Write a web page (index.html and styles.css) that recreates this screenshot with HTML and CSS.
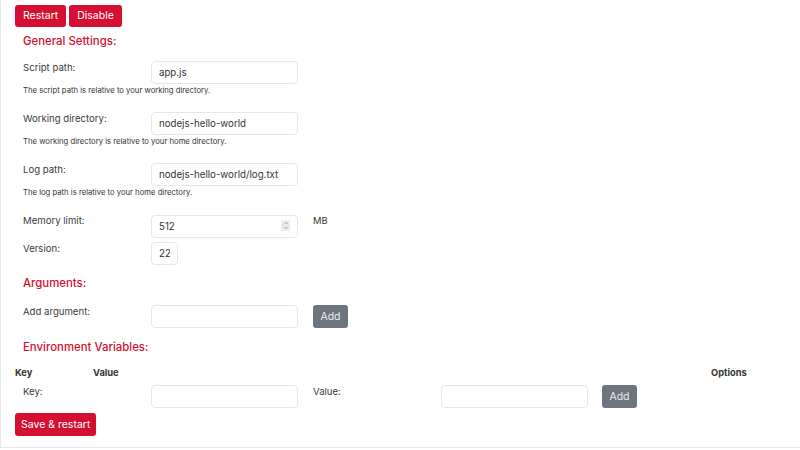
FILE: index.html
```html
<!DOCTYPE html>
<html>
<head>
<meta charset="utf-8">
<link rel="stylesheet" href="styles.css">
</head>
<body>
<div class="card">
  <div class="actions">
    <button class="btn btn-red">Restart</button>
    <button class="btn btn-red">Disable</button>
  </div>
  <div class="section">
    <h2 class="heading first">General Settings:</h2>
    <div class="row">
      <label class="label">Script path:</label>
      <input class="input" type="text" value="app.js">
    </div>
    <p class="help">The script path is relative to your working directory.</p>
    <div class="row gap">
      <label class="label">Working directory:</label>
      <input class="input" type="text" value="nodejs-hello-world">
    </div>
    <p class="help">The working directory is relative to your home directory.</p>
    <div class="row gap">
      <label class="label">Log path:</label>
      <input class="input" type="text" value="nodejs-hello-world/log.txt">
    </div>
    <p class="help">The log path is relative to your home directory.</p>
    <div class="row gap">
      <label class="label">Memory limit:</label>
      <div class="num-wrap">
        <input class="input" type="text" value="512">
        <span class="spinner"><svg width="6" height="9" viewBox="0 0 6 9"><path d="M1 3.2 L3 1.2 L5 3.2 M1 5.8 L3 7.8 L5 5.8" fill="none" stroke="#8a8f96" stroke-width="0.8"/></svg></span>
      </div>
      <span class="unit">MB</span>
    </div>
    <div class="row small-gap">
      <label class="label">Version:</label>
      <input class="input short" type="text" value="22">
    </div>
    <h2 class="heading">Arguments:</h2>
    <div class="row">
      <label class="label">Add argument:</label>
      <input class="input" type="text">
      <button class="btn btn-gray add">Add</button>
    </div>
    <h2 class="heading env">Environment Variables:</h2>
  </div>
  <div class="table-head">
    <span class="th th-key">Key</span>
    <span class="th th-value">Value</span>
    <span class="th th-options">Options</span>
  </div>
  <div class="section">
    <div class="row env-row">
      <label class="label">Key:</label>
      <input class="input" type="text">
      <label class="label value-label">Value:</label>
      <input class="input" type="text">
      <button class="btn btn-gray add2">Add</button>
    </div>
  </div>
  <button class="btn btn-red save">Save &amp; restart</button>
</div>
</body>
</html>
```
FILE: styles.css
```css
* { box-sizing: border-box; }
html, body { margin: 0; padding: 0; background: #fff; }
body {
  font-family: Inter, "Noto Sans", sans-serif;
  color: #333;
  width: 800px;
  height: 450px;
  overflow: hidden;
}
.card {
  border-left: 1px solid #e8e8e8;
  border-bottom: 1px solid #e8e8e8;
  height: 448px;
  padding: 5px 14px 0;
}
.actions { display: flex; gap: 3px; }
.btn {
  font-family: Inter, "Noto Sans", sans-serif;
  font-size: 10.5px;
  border: none;
  border-radius: 3px;
  color: #fff;
  height: 22px;
  padding: 0 8px;
  line-height: 22px;
  cursor: pointer;
}
.btn-red { background: #d50f31; }
.btn-gray { background: #6c757d; color: #e9ecef; height: 23px; width: 35px; padding: 0; }
.section { padding-left: 8px; }
.heading {
  margin: 10px 0 0;
  font-size: 11.4px;
  font-weight: 500;
  line-height: 16px;
  color: #d50f31;
}
.heading.first { margin-top: 6px; }
.heading + .row { margin-top: 14px; }
.heading.first + .row { margin-top: 12px; }
.heading.env { margin-top: 11px; }
.row { display: flex; align-items: flex-start; }
.row.gap { margin-top: 16px; }
.row.small-gap { margin-top: 5px; }
.label {
  width: 128px;
  flex: none;
  font-size: 9.6px;
  line-height: 14px;
  color: #3a3a3a;
}
.input {
  width: 147px;
  height: 23px;
  border: 1px solid #e6e6e6;
  border-radius: 4px;
  padding: 0 7px;
  font-family: Inter, "Noto Sans", sans-serif;
  font-size: 9.7px;
  color: #333;
  background: #fff;
  outline: none;
}
.num-wrap { position: relative; width: 147px; height: 23px; }
.spinner {
  position: absolute;
  left: 130px;
  top: 6px;
  width: 9px;
  height: 11px;
  background: #e8edf2;
  display: flex;
  align-items: center;
  justify-content: center;
}
.input.short { width: 27px; height: 23px; }
.unit { margin-left: 15px; font-size: 9.4px; line-height: 14px; }
.help {
  margin: 2px 0 0;
  font-size: 7.7px;
  line-height: 10px;
  color: #333;
}
.add { margin-left: 15px; }
.table-head {
  display: flex;
  margin-top: 12px;
  font-size: 9.3px;
  font-weight: 700;
  line-height: 12px;
  color: #333;
}
.th-key { width: 78px; }
.th-value { flex: 1; }
.th-options { width: 75px; }
.env-row { margin-top: 6px; }
.value-label { margin-left: 15px; }
.add2 { margin-left: 14px; }
.save { margin-top: 5px; height: 23px; padding: 0 6px; align-self: flex-start; }
```
